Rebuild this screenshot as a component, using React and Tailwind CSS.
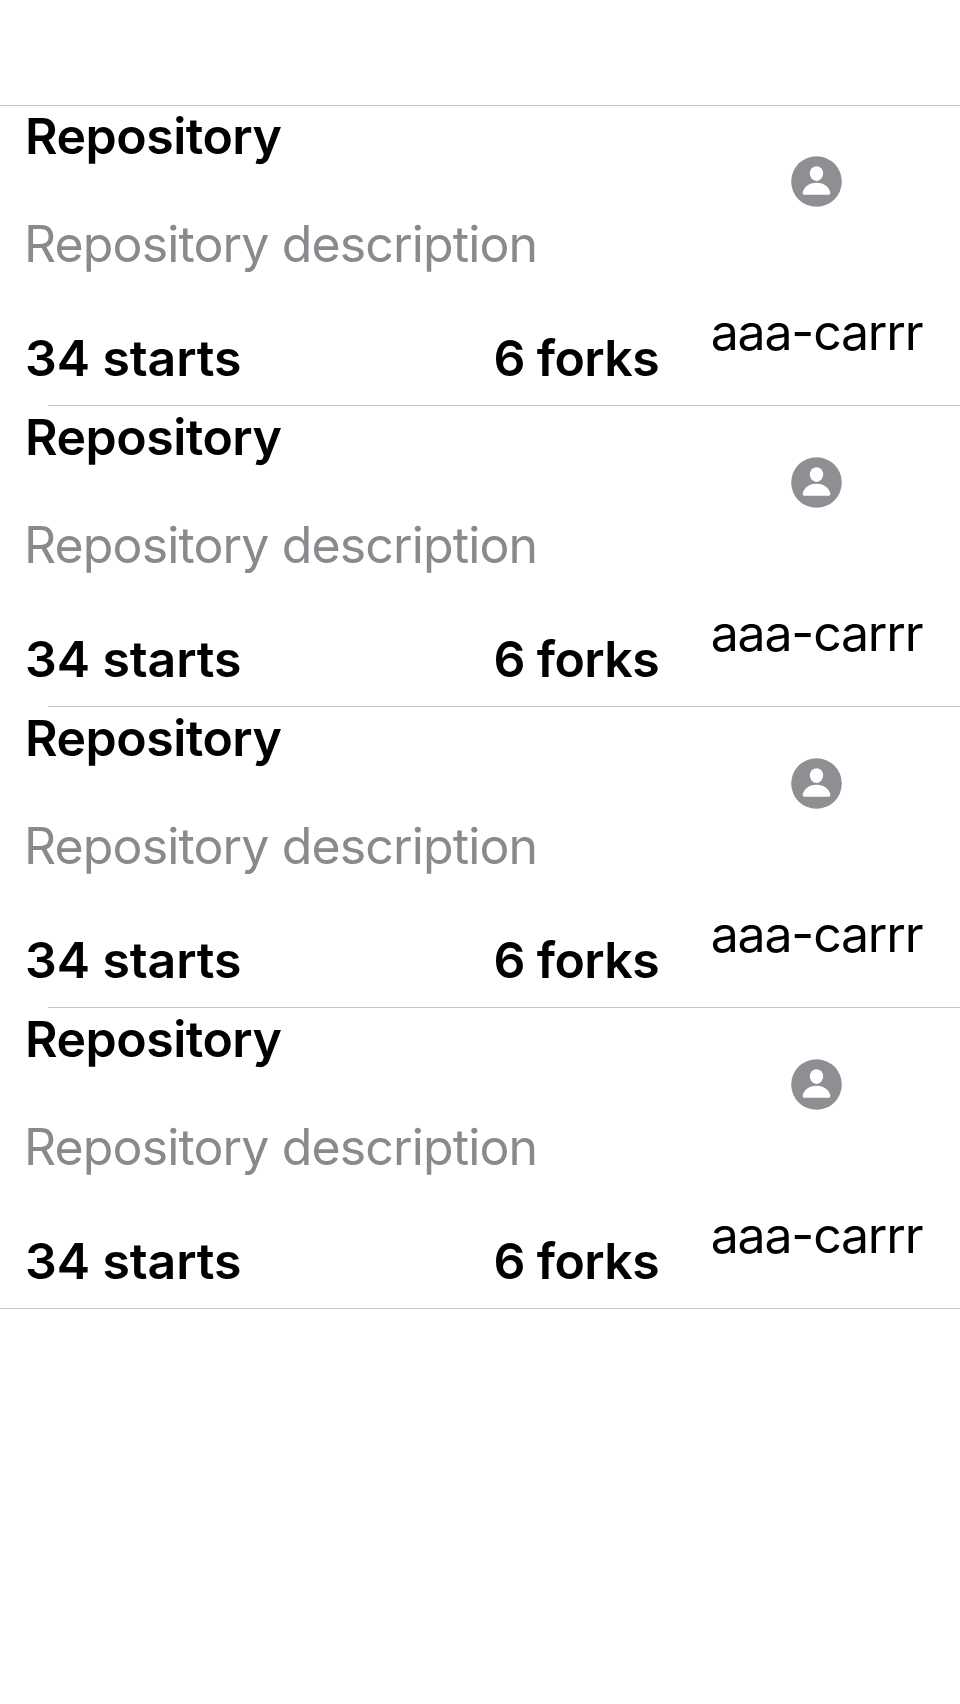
const rows = [1, 2, 3, 4];

function PersonIcon() {
  return (
    <svg className="block h-[51px] w-[51px]" viewBox="0 0 51 51">
      <circle cx="25.5" cy="25.5" r="25.3" fill="#8e8e93" />
      <ellipse cx="25.5" cy="17.6" rx="6.7" ry="7.4" fill="#fff" />
      <path d="M13.600 38.800c-1.300 0-1.900-.7-1.900-1.800 0-3.500 4.600-10.300 13.800-10.300s13.800 6.800 13.800 10.300c0 1.100-.6 1.800-1.900 1.800z" fill="#fff" />
    </svg>
  );
}

function RepositoryRow({ last }) {
  return (
    <div className="flex h-[301px] flex-col whitespace-nowrap">
      <div className="flex h-[300px] pt-px pl-[24px]">
        <div className="flex w-[635px] flex-col text-[50px] leading-[60px]">
          <div className="pl-px font-semibold tracking-[-0.5px]">Repository</div>
          <div className="mt-[48px] tracking-[-0.87px] text-[#8a8a8e]">Repository description</div>
          <div className="mt-[54px] flex justify-between pl-px font-semibold">
            <span className="tracking-[-0.1px]">34 starts</span>
            <span className="tracking-[-0.6px]">6 forks</span>
          </div>
        </div>
        <div className="ml-[51px] flex w-[213px] flex-col items-center pt-[50px] text-[50px] leading-[60px]">
          <PersonIcon />
          <div className="mt-[95px] tracking-[-1.2px]">aaa-carrr</div>
        </div>
      </div>
      <div className={last ? "h-px bg-[#c6c6c8]" : "ml-[48px] h-px bg-[#c6c6c8]"} />
    </div>
  );
}

export default function App() {
  return (
    <main className="h-[1704px] w-[960px] overflow-hidden bg-white pt-[105px] font-['Inter',sans-serif] text-black">
      <div className="h-px bg-[#c6c6c8]" />
      <div className="-mt-px">
        {rows.map((id) => (
          <RepositoryRow key={id} last={id === rows.length} />
        ))}
      </div>
    </main>
  );
}
